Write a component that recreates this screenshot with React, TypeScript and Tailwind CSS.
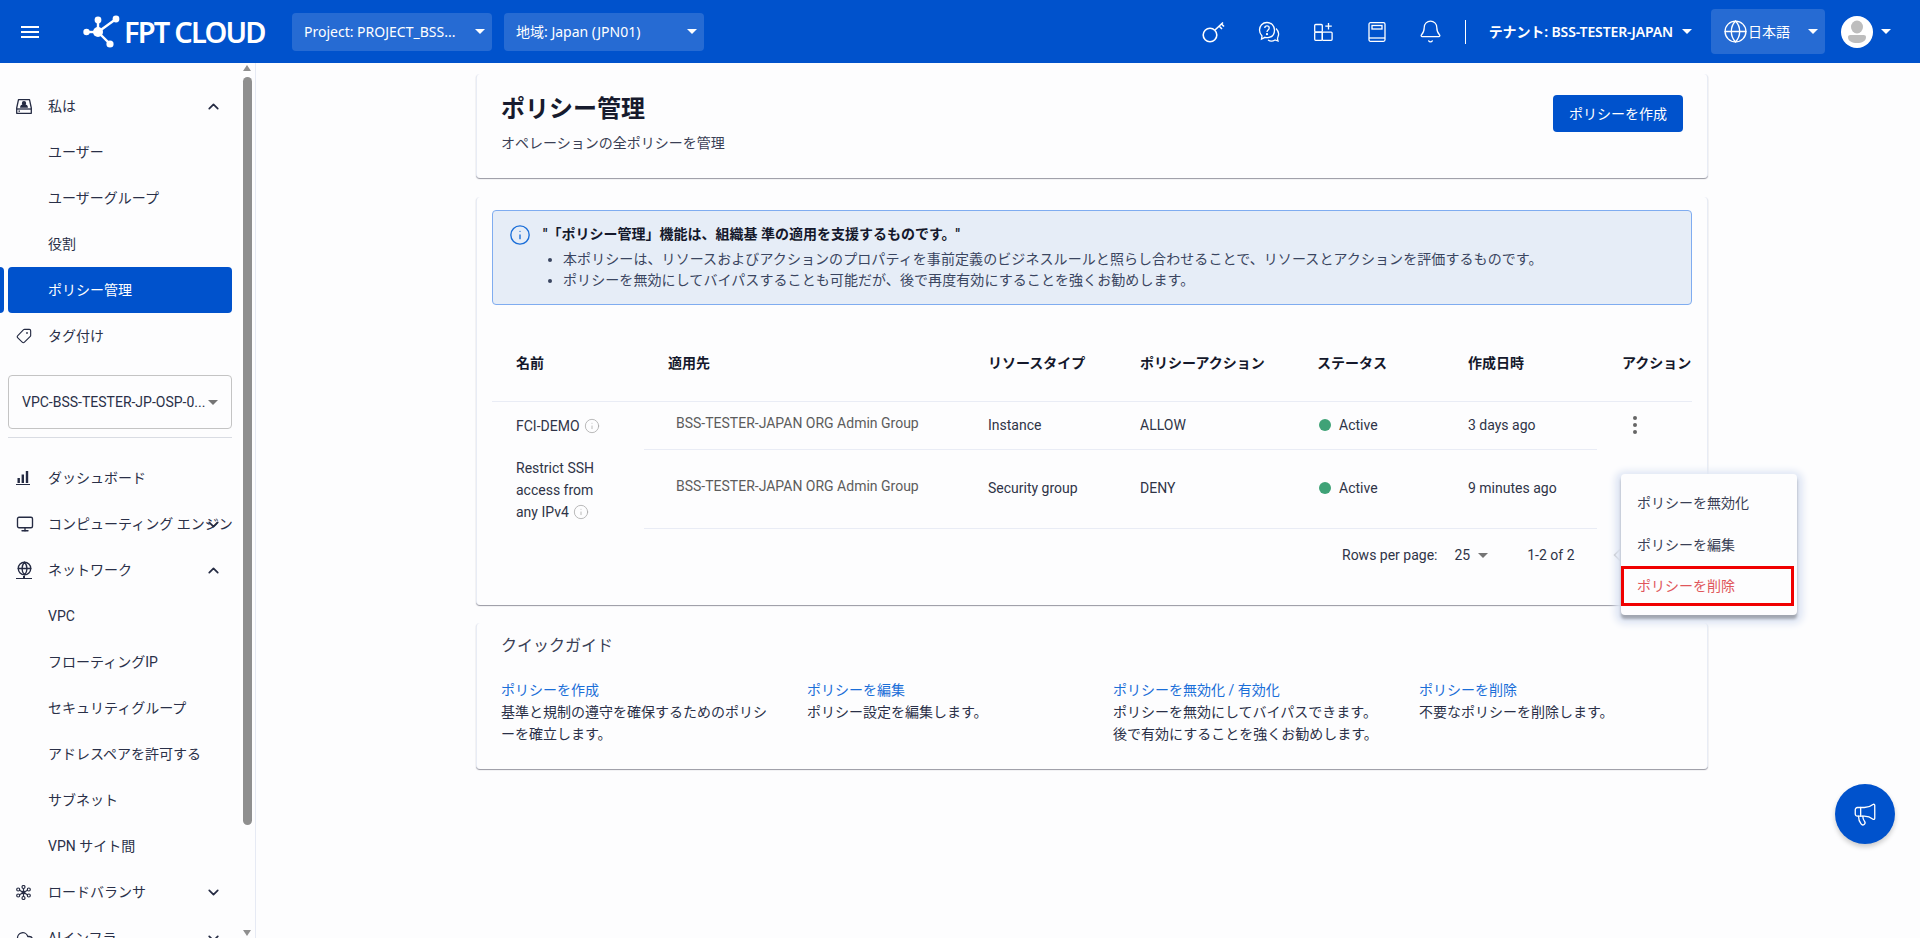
import { Bell, ChevronDown, ChevronLeft, ChevronUp, Cloud, Globe, Info, Megaphone, Monitor, Tag } from "lucide-react";
import type { ReactNode } from "react";

function Caret({ className = "border-t-white" }: { className?: string }) {
  return <span className={`inline-block h-0 w-0 border-x-[5px] border-t-[5px] border-x-transparent ${className}`} />;
}

function FptLogo() {
  return (
    <svg width="38" height="34" viewBox="0 0 38 34" fill="none" className="shrink-0">
      <g stroke="white" strokeWidth="2.4">
        <path d="M15 17 L33 4" />
        <path d="M15 17 L15 6" />
        <path d="M15 17 L3 17" />
        <path d="M15 17 L27 29" />
      </g>
      <g fill="white">
        <circle cx="15" cy="17" r="5" />
        <circle cx="33" cy="4" r="3.4" />
        <circle cx="15" cy="5" r="3.4" />
        <circle cx="3.5" cy="17" r="3.2" />
        <circle cx="27" cy="29" r="3.6" />
      </g>
    </svg>
  );
}

function KeyIcon() {
  return (
    <svg width="23" height="22" viewBox="0 0 23 22" fill="none" stroke="white" strokeWidth="1.6">
      <circle cx="8" cy="14" r="6.8" />
      <path d="M13 9 L21 1.5 M17 5 L20 8 M19.5 3 L22 5.5" />
    </svg>
  );
}

function HelpIcon() {
  return (
    <svg width="22" height="22" viewBox="0 0 22 22" fill="none" stroke="white" strokeWidth="1.3">
      <path d="M9 1.5 C4.5 1.5 1.5 4.8 1.5 9 C1.5 11.5 2.5 13.5 4 15 L3.5 18 L7 16.3 C8 16.6 9 16.7 10 16.6 C14.5 16.2 16.5 13 16.5 9 C16.5 4.8 13.5 1.5 9 1.5 Z" />
      <path d="M6.8 7 C6.8 4.2 11.2 4.2 11.2 7 C11.2 9 9 9 9 11" />
      <circle cx="9" cy="13.2" r=".5" fill="white" />
      <path d="M18 7.5 C20 9.5 21 11.5 20.5 14 C20.2 15.5 19.5 16.5 19.5 18 L20 20 L17 19 C14.5 20.5 12 20.3 10 19" />
    </svg>
  );
}

function AppsIcon() {
  return (
    <svg width="19" height="19" viewBox="0 0 19 19" fill="none" stroke="white" strokeWidth="1.3">
      <rect x=".7" y="2.5" width="7.6" height="7.6" rx="1" />
      <rect x=".7" y="10.1" width="7.6" height="8.2" rx="1" />
      <rect x="8.3" y="10.1" width="9.8" height="8.2" rx="1" />
      <path d="M14.5 1 V7.5 M11.3 4.2 H17.8" />
    </svg>
  );
}

function BookIcon() {
  return (
    <svg width="18" height="20" viewBox="0 0 18 20" fill="none" stroke="white" strokeWidth="1.3">
      <rect x="1" y=".7" width="16" height="18.6" rx="1.5" />
      <rect x="4" y="3.5" width="10" height="3.5" />
      <path d="M1 16 H17" />
    </svg>
  );
}

function AvatarIcon() {
  return (
    <span className="relative flex h-[32px] w-[32px] items-center justify-center overflow-hidden rounded-full bg-white">
      <svg width="32" height="32" viewBox="0 0 32 32" fill="#bdbdbd">
        <ellipse cx="16" cy="11" rx="6" ry="6.5" />
        <path d="M7 21 C7 19 9 19 11 19 H21 C23 19 25 19 25 21 C25 25 21 27 16 27 C11 27 7 25 7 21 Z" />
      </svg>
    </span>
  );
}

function PersonBoxIcon() {
  return (
    <svg width="16" height="15" viewBox="0 0 16 15" fill="none" stroke="#252b43" strokeWidth="1.3">
      <path d="M2.5 .7 H13.5 L15.3 9 V14.3 H.7 V9 Z" strokeLinejoin="round" />
      <path d="M.7 10 H15.3" />
      <circle cx="8" cy="4.2" r="1.5" fill="#252b43" />
      <path d="M4.8 8 C5 6 6.5 5.8 8 5.8 C9.5 5.8 11 6 11.2 8 Z" fill="#252b43" />
      <path d="M2.5 12.2 H4" />
    </svg>
  );
}

function BarsIcon() {
  return (
    <svg width="14" height="14" viewBox="0 0 14 14" fill="#252b43">
      <rect x="1.5" y="7" width="2.4" height="5" />
      <rect x="5.6" y="3.5" width="2.4" height="8.5" />
      <rect x="9.8" y="0" width="2.4" height="12" />
      <rect x="0" y="13" width="14" height="1" />
    </svg>
  );
}

function GlobeStandIcon() {
  return (
    <span className="flex flex-col items-center">
      <Globe size={15} strokeWidth={2.2} className="text-[#252b43]" />
      <span className="h-[2px] w-[2px] bg-[#252b43]" />
      <span className="h-[1px] w-[16px] bg-[#252b43]" />
    </span>
  );
}

function NodesIcon() {
  return (
    <svg width="15" height="15" viewBox="0 0 15 15" fill="none" stroke="#252b43" strokeWidth="1.2">
      <path d="M7.5 7.5 L7.5 2 M7.5 7.5 L2.2 4.5 M7.5 7.5 L12.8 4.5 M7.5 7.5 L2.2 10.5 M7.5 7.5 L12.8 10.5 M7.5 7.5 L7.5 13" />
      <g fill="#fdfdfe">
        <circle cx="7.5" cy="2" r="1.5" />
        <circle cx="2.2" cy="4.5" r="1.5" />
        <circle cx="12.8" cy="4.5" r="1.5" />
        <circle cx="2.2" cy="10.5" r="1.5" />
        <circle cx="12.8" cy="10.5" r="1.5" />
        <circle cx="7.5" cy="13" r="1.5" />
      </g>
      <circle cx="7.5" cy="7.5" r="1.3" fill="#252b43" />
    </svg>
  );
}

type NavRow = {
  label: string;
  icon?: ReactNode;
  open?: boolean;
  active?: boolean;
};

const topRows: NavRow[] = [
  { label: "私は", icon: <PersonBoxIcon />, open: true },
  { label: "ユーザー" },
  { label: "ユーザーグループ" },
  { label: "役割" },
  { label: "ポリシー管理", active: true },
  { label: "タグ付け", icon: <Tag size={16} strokeWidth={1.7} className="-scale-x-100 text-[#252b43]" /> },
];

const bottomRows: NavRow[] = [
  { label: "ダッシュボード", icon: <BarsIcon /> },
  { label: "コンピューティング エンジン", icon: <Monitor size={18} strokeWidth={1.8} className="text-[#252b43]" />, open: false },
  { label: "ネットワーク", icon: <GlobeStandIcon />, open: true },
  { label: "VPC" },
  { label: "フローティングIP" },
  { label: "セキュリティグループ" },
  { label: "アドレスペアを許可する" },
  { label: "サブネット" },
  { label: "VPN サイト間" },
  { label: "ロードバランサ", icon: <NodesIcon />, open: false },
  { label: "AIインフラ", icon: <Cloud size={18} strokeWidth={1.7} className="text-[#252b43]" />, open: false },
];

function SideRow({ row }: { row: NavRow }) {
  return (
    <div className="relative h-[46px] shrink-0">
      {row.active && <div className="absolute left-0 top-0 h-[46px] w-[4px] rounded-r bg-[#0052cc]" />}
      <div className={`ml-[8px] mr-[23px] flex h-[46px] items-center rounded pl-[8px] text-sm ${row.active ? "bg-[#0052cc] text-white" : "text-[#2a3048]"}`}>
        <span className="flex w-[32px] shrink-0 items-center">{row.icon}</span>
        <span className="whitespace-nowrap">{row.label}</span>
      </div>
      {row.open === true && <ChevronUp size={17} strokeWidth={2.4} className="absolute left-[205px] top-[15px] text-[#252b43]" />}
      {row.open === false && <ChevronDown size={17} strokeWidth={2.4} className="absolute left-[205px] top-[15px] text-[#252b43]" />}
    </div>
  );
}

function Sidebar() {
  return (
    <aside className="relative h-full w-[256px] shrink-0 overflow-hidden border-r border-[#e6eaf4] pt-[20px]">
      {topRows.map((row) => (
        <SideRow key={row.label} row={row} />
      ))}
      <div className="ml-[8px] mr-[23px] mt-[16px] flex h-[54px] items-center justify-between rounded border border-[#c4c4c4] pl-[13px] pr-[13px] text-sm text-[#2a3048]">
        <span className="whitespace-nowrap">VPC-BSS-TESTER-JP-OSP-0...</span>
        <Caret className="border-t-[#757575]" />
      </div>
      <div className="ml-[8px] mr-[23px] mt-[8px] h-px bg-[#d9dce3]" />
      <div className="mt-[17px]">
        {bottomRows.map((row) => (
          <SideRow key={row.label} row={row} />
        ))}
      </div>
      {/* scrollbar overlay */}
      <div className="absolute right-[3px] top-0 h-full w-[9px] bg-[#fdfdfe]">
        <div className="absolute left-0 top-[2px] h-0 w-0 border-x-[4.5px] border-b-[6px] border-x-transparent border-b-[#8f8f8f]" />
        <div className="absolute left-0 top-[14px] h-[748px] w-[9px] rounded-[5px] bg-[#8f8f8f]" />
        <div className="absolute bottom-[2px] left-0 h-0 w-0 border-x-[4.5px] border-t-[6px] border-x-transparent border-t-[#8f8f8f]" />
      </div>
    </aside>
  );
}

function Header() {
  return (
    <header className="flex h-[63px] shrink-0 items-center bg-[#0052cc] font-['Noto_Sans','Noto_Sans_CJK_JP',sans-serif] text-white">
      <svg width="18" height="12" viewBox="0 0 18 12" fill="white" className="ml-[21px]">
        <rect y="0" width="18" height="2" />
        <rect y="5" width="18" height="2" />
        <rect y="10" width="18" height="2" />
      </svg>
      <div className="ml-[44px] flex w-[184px] items-center gap-[3px]">
        <FptLogo />
        <span className="whitespace-nowrap text-[29px] font-semibold leading-none tracking-[-1.8px]">FPT CLOUD</span>
      </div>
      <div className="ml-[25px] flex h-[38px] w-[200px] items-center justify-between rounded bg-white/15 pl-[12px] pr-[7px] text-sm">
        <span className="whitespace-nowrap">Project: PROJECT_BSS...</span>
        <Caret />
      </div>
      <div className="ml-[12px] flex h-[38px] w-[200px] items-center justify-between rounded bg-white/15 pl-[12px] pr-[7px] text-sm">
        <span className="whitespace-nowrap">地域: Japan (JPN01)</span>
        <Caret />
      </div>
      <div className="ml-auto flex items-center">
        <div className="flex w-[56px] justify-center"><KeyIcon /></div>
        <div className="flex w-[55px] justify-center"><HelpIcon /></div>
        <div className="flex w-[54px] justify-center"><AppsIcon /></div>
        <div className="flex w-[53px] justify-center"><BookIcon /></div>
        <div className="flex w-[54px] justify-center"><Bell size={25} strokeWidth={1.2} /></div>
        <div className="ml-[7px] h-[24px] w-px bg-white" />
        <span className="ml-[23px] whitespace-nowrap text-sm font-semibold tracking-[-.12px]">テナント: BSS-TESTER-JAPAN</span>
        <span className="ml-[9px] flex"><Caret /></span>
        <div className="ml-[19px] flex h-[45px] w-[114px] items-center rounded bg-white/15 pl-[12px] pr-[7px]">
          <Globe size={25} strokeWidth={1.3} />
          <span className="text-sm">日本語</span>
          <span className="ml-auto flex"><Caret /></span>
        </div>
        <div className="ml-[16px]"><AvatarIcon /></div>
        <span className="ml-[8px] mr-[29px] flex"><Caret /></span>
      </div>
    </header>
  );
}

const cardClass = "rounded border-x border-[#e8ecf5] bg-[#fdfdfe] shadow-[0_1px_1px_rgba(50,50,70,.5)]";

function Hint() {
  return <Info size={16} strokeWidth={1.2} className="ml-[4px] inline-block align-[-3px] text-[#a8a8a8]" />;
}

const cellClass = "flex items-center pb-[2px] text-sm text-[#2f3447]";
const headClass = "flex items-center border-b border-[#e9ecf5] pb-[3px] text-sm font-bold text-[#14182b]";
const rowLine = "border-b border-[#e9ecf5]";

function PolicyTable() {
  return (
    <div className="mx-[15px] mt-[22px] grid grid-cols-[152px_344px_152px_177px_151px_129px_95px] grid-rows-[75px_48px_79px]">
      <div className={`${headClass} pl-[24px]`}>名前</div>
      <div className={`${headClass} pl-[24px]`}>適用先</div>
      <div className={headClass}>リソースタイプ</div>
      <div className={headClass}>ポリシーアクション</div>
      <div className={headClass}>ステータス</div>
      <div className={headClass}>作成日時</div>
      <div className={`${headClass} pl-[25px]`}>アクション</div>

      <div className="flex items-center pl-[24px] text-sm text-[#2f3447]">
        <span>FCI-DEMO<Hint /></span>
      </div>
      <div className={`${cellClass} ${rowLine} !pb-[6px] pl-[32px] text-[#5c5c5c]`}>BSS-TESTER-JAPAN ORG Admin Group</div>
      <div className={`${cellClass} ${rowLine}`}>Instance</div>
      <div className={`${cellClass} ${rowLine}`}>ALLOW</div>
      <div className={`${cellClass} ${rowLine} gap-[8px] pl-[2px]`}>
        <span className="h-[12px] w-[12px] rounded-full bg-[#3fa277]" />Active
      </div>
      <div className={`${cellClass} ${rowLine}`}>3 days ago</div>
      <div className="flex flex-col items-center justify-center gap-[3px] pb-[2px] pr-[19px]">
        <span className="h-[4px] w-[4px] rounded-full bg-[#666]" />
        <span className="h-[4px] w-[4px] rounded-full bg-[#666]" />
        <span className="h-[4px] w-[4px] rounded-full bg-[#666]" />
      </div>

      <div className="flex items-center pl-[24px] text-sm leading-[22px] text-[#2f3447]">
        <span className="w-[100px]">Restrict SSH access from any IPv4<Hint /></span>
      </div>
      <div className={`${cellClass} ${rowLine} !pb-[6px] pl-[32px] text-[#5c5c5c]`}>BSS-TESTER-JAPAN ORG Admin Group</div>
      <div className={`${cellClass} ${rowLine}`}>Security group</div>
      <div className={`${cellClass} ${rowLine}`}>DENY</div>
      <div className={`${cellClass} ${rowLine} gap-[8px] pl-[2px]`}>
        <span className="h-[12px] w-[12px] rounded-full bg-[#3fa277]" />Active
      </div>
      <div className={`${cellClass} ${rowLine}`}>9 minutes ago</div>
      <div />
    </div>
  );
}

function Pagination() {
  return (
    <div className="flex h-[52px] items-center pl-[865px] text-sm text-[#2f3447]">
      <span className="whitespace-nowrap">Rows per page:</span>
      <span className="ml-[17px]">25</span>
      <span className="ml-[8px] flex"><Caret className="border-t-[#757575]" /></span>
      <span className="ml-[39px] whitespace-nowrap">1-2 of 2</span>
      <ChevronLeft size={20} className="ml-[32px] text-[#bdbdbd]" />
    </div>
  );
}

function ActionMenu() {
  return (
    <div className="absolute left-[1621px] top-[474px] z-10 w-[176px] rounded bg-[#fdfdfe] pt-[8px] text-sm text-[#3a3f55] shadow-[0_4px_3px_rgba(0,0,0,.28),0_3px_7px_6px_#dfe6f4]">
      <div className="flex h-[42px] items-center pl-[16px]">ポリシーを無効化</div>
      <div className="flex h-[42px] items-center pl-[16px]">ポリシーを編集</div>
      <div className="mb-[9px] mr-[3px] flex h-[40px] items-center border-[3px] border-[#f00000] pl-[13px] text-[#e0565b]">ポリシーを削除</div>
    </div>
  );
}

const guides = [
  { title: "ポリシーを作成", lines: ["基準と規制の遵守を確保するためのポリシ", "ーを確立します。"] },
  { title: "ポリシーを編集", lines: ["ポリシー設定を編集します。"] },
  { title: "ポリシーを無効化 / 有効化", lines: ["ポリシーを無効にしてバイパスできます。", "後で有効にすることを強くお勧めします。"] },
  { title: "ポリシーを削除", lines: ["不要なポリシーを削除します。"] },
];

export default function App() {
  return (
    <div className="flex h-screen flex-col overflow-hidden bg-[#fdfdfe] font-['Roboto','Noto_Sans_CJK_JP',sans-serif]">
      <Header />
      <div className="flex min-h-0 flex-1">
        <Sidebar />
        <main className="ml-[220px] w-[1232px] pt-[11px]">
          <section className={`${cardClass} flex h-[104px] justify-between pl-[24px] pr-[24px] pt-[21px]`}>
            <div>
              <h1 className="text-2xl font-bold leading-[28px] text-[#171b2e]">ポリシー管理</h1>
              <p className="mt-[10px] text-sm leading-[20px] text-[#3a3f55]">オペレーションの全ポリシーを管理</p>
            </div>
            <button type="button" className="h-[37px] w-[130px] rounded bg-[#0052cc] text-sm text-white">ポリシーを作成</button>
          </section>

          <section className={`${cardClass} mt-[19px] h-[408px] pt-[13px]`}>
            <div className="mx-[15px] h-[95px] rounded border border-[#7facf0] bg-[#e6edf7] pl-[16px] pt-[13px] text-sm">
              <div className="flex items-center gap-[12px] leading-[21px]">
                <Info size={22} strokeWidth={1.5} className="-my-[1px] text-[#1a6ed8]" />
                <span className="font-bold text-[#14182b]">"「ポリシー管理」機能は、組織基 準の適用を支援するものです。"</span>
              </div>
              <ul className="ml-[54px] mt-[4px] list-disc text-sm leading-[21px] tracking-[.08px] text-[#3a4560]">
                <li>本ポリシーは、リソースおよびアクションのプロパティを事前定義のビジネスルールと照らし合わせることで、リソースとアクションを評価するものです。</li>
                <li>ポリシーを無効にしてバイパスすることも可能だが、後で再度有効にすることを強くお勧めします。</li>
              </ul>
            </div>
            <PolicyTable />
            <Pagination />
          </section>

          <section className={`${cardClass} mt-[18px] h-[146px] pl-[24px] pr-[24px] pt-[12px]`}>
            <h2 className="text-base leading-[22px] text-[#3a3f55]">クイックガイド</h2>
            <div className="mt-[22px] grid grid-cols-[repeat(4,276px)] gap-x-[30px] text-sm leading-[22px]">
              {guides.map((g) => (
                <div key={g.title}>
                  <div className="text-[#1a6ed8]">{g.title}</div>
                  {g.lines.map((line) => (
                    <div key={line} className="whitespace-nowrap text-[#2a3048]">{line}</div>
                  ))}
                </div>
              ))}
            </div>
          </section>
        </main>
      </div>
      <ActionMenu />
      <button type="button" className="fixed left-[1835px] top-[784px] flex h-[60px] w-[60px] items-center justify-center rounded-full bg-[#0052cc] text-white shadow-[0_3px_5px_rgba(0,0,0,.2)]">
        <Megaphone size={26} strokeWidth={1.2} />
      </button>
    </div>
  );
}
